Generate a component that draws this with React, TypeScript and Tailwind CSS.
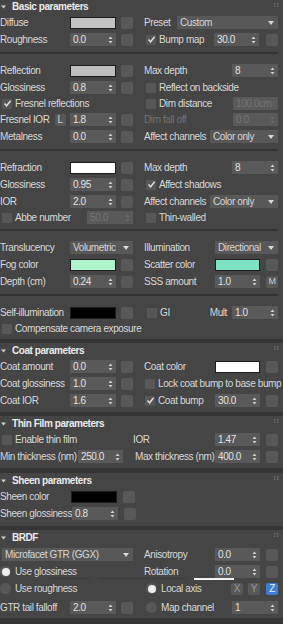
import React from "react";

type Kids = { children?: React.ReactNode };

function Arrows({ dim }: { dim?: boolean }) {
  return (
    <svg width="5" height="8" viewBox="0 0 5 8" className={dim ? "fill-[#6c6c6c]" : "fill-[#cfcfcf]"}>
      <path d="M2.5 0.5L4.5 3H0.5Z M0.5 5H4.5L2.5 7.5Z" />
    </svg>
  );
}

function Spin({ v, w = "w-[46px]", dim, cls = "" }: { v: string; w?: string; dim?: boolean; cls?: string }) {
  return (
    <div
      className={`${w} ${cls} h-[13px] shrink-0 bg-[#595959] flex items-center justify-between pl-[3px] pr-[3px] ${
        dim ? "text-[#767676]" : "text-[#e2e2e2]"
      }`}
    >
      <span>{v}</span>
      <Arrows dim={dim} />
    </div>
  );
}

function Swatch({ c, w = "w-[46px]" }: { c: string; w?: string }) {
  return <div className={`${w} ${c} h-[12px] shrink-0 border border-[#1c1c1c]`} />;
}

function MapBtn({ t, ml = "ml-[5px]" }: { t?: string; ml?: string }) {
  return (
    <div className={`${ml} w-[12px] h-[12px] shrink-0 rounded-[2px] bg-[#585858] flex items-center justify-center text-[9px] text-[#cfcfcf]`}>
      {t}
    </div>
  );
}

function Drop({ v, w, cls = "" }: { v: string; w: string; cls?: string }) {
  return (
    <div className={`${w} ${cls} h-[13px] shrink-0 bg-[#585858] flex items-center justify-between pl-[3px] pr-[4px] text-[#d6d6d6]`}>
      <span className="whitespace-nowrap">{v}</span>
      <svg width="6" height="4" viewBox="0 0 6 4">
        <path d="M0 0H6L3 4Z" fill="#d8d8d8" />
      </svg>
    </div>
  );
}

function Check({ on, label, cls = "", dim }: { on?: boolean; label: string; cls?: string; dim?: boolean }) {
  return (
    <div className={`flex items-center ${cls}`}>
      <div className="w-[10px] h-[10px] shrink-0 bg-[#575757] rounded-[1px] flex items-center justify-center">
        {on && (
          <svg width="9" height="9" viewBox="0 0 9 9">
            <path d="M1.5 4.5L3.6 6.8L7.6 1.8" stroke="#e0e0e0" strokeWidth="1.4" fill="none" />
          </svg>
        )}
      </div>
      <span className={`ml-[3px] whitespace-nowrap ${dim ? "text-[#777]" : ""}`}>{label}</span>
    </div>
  );
}

function Radio({ on, label, cls = "" }: { on?: boolean; label: string; cls?: string }) {
  return (
    <div className={`flex items-center ${cls}`}>
      <div className="w-[11px] h-[11px] shrink-0 rounded-full bg-[#585858] flex items-center justify-center">
        {on && <div className="w-[8px] h-[8px] rounded-full bg-[#ececec]" />}
      </div>
      <span className="ml-[4px] whitespace-nowrap">{label}</span>
    </div>
  );
}

function Grip() {
  return (
    <svg width="5" height="4" viewBox="0 0 5 4" className="ml-auto self-start mt-[3px] mr-[4px]">
      <rect x="0" y="0" width="1.5" height="1.5" fill="#6e6e6e" />
      <rect x="3" y="0" width="1.5" height="1.5" fill="#6e6e6e" />
      <rect x="0" y="2.5" width="1.5" height="1.5" fill="#6e6e6e" />
      <rect x="3" y="2.5" width="1.5" height="1.5" fill="#6e6e6e" />
    </svg>
  );
}

function Header({ title, h = "h-[15px]" }: { title: string; h?: string }) {
  return (
    <div className={`flex items-center ${h}`}>
      <svg width="5" height="4" viewBox="0 0 5 4" className="ml-[1px] mr-[6px]">
        <path d="M0 0.5H5L2.5 3.5Z" fill="#cfcfcf" />
      </svg>
      <span className="font-bold text-[#ebebeb] tracking-[-0.45px]">{title}</span>
      <Grip />
    </div>
  );
}

function Row({ h = "h-[17px]", children, cls = "" }: Kids & { h?: string; cls?: string }) {
  return <div className={`flex items-center ${h} ${cls}`}>{children}</div>;
}

function L({ label, children, w = "w-[141px]", pr = "pr-[8px]", dim }: Kids & { label?: string; w?: string; pr?: string; dim?: boolean }) {
  return (
    <div className={`${w} ${pr} shrink-0 flex items-center h-full`}>
      {label !== undefined && <span className={`flex-1 whitespace-nowrap ${dim ? "text-[#727272]" : ""}`}>{label}</span>}
      {children}
    </div>
  );
}

function R({ label, children, pl = "pl-[3px]", dim }: Kids & { label?: string; pl?: string; dim?: boolean }) {
  return (
    <div className={`flex-1 ${pl} pr-[5px] flex items-center h-full`}>
      {label !== undefined && <span className={`flex-1 whitespace-nowrap ${dim ? "text-[#727272]" : ""}`}>{label}</span>}
      {children}
    </div>
  );
}

function Sep() {
  return (
    <div className="h-[14px] pt-[4px] pr-[5px]">
      <div className="h-[2px] bg-[#333333]" />
    </div>
  );
}

function Band({ h = "h-[4px]" }: { h?: string }) {
  return <div className={`${h} bg-[#353535]`} />;
}

export default function App() {
  return (
    <div className="w-[283px] h-[624px] overflow-hidden bg-[#454545] font-['Liberation_Sans',Arial,sans-serif] text-[10px] tracking-[-0.4px] leading-none text-[#d8d8d8]">
      {/* Basic parameters */}
      <div className="pb-[3px]">
        <Header title="Basic parameters" h="h-[14px]" />
        <Row>
          <L label="Diffuse">
            <Swatch c="bg-[#c3c3c3]" />
            <MapBtn />
          </L>
          <R label="Preset">
            <Drop v="Custom" w="w-[101px]" />
          </R>
        </Row>
        <Row>
          <L label="Roughness">
            <Spin v="0.0" />
            <MapBtn />
          </L>
          <R>
            <Check on label="Bump map" cls="flex-1 ml-[2px]" />
            <Spin v="30.0" w="w-[45px]" />
            <MapBtn ml="ml-[7px]" />
          </R>
        </Row>
        <Sep />
        <Row>
          <L label="Reflection">
            <Swatch c="bg-[#bdbdbd]" />
            <MapBtn />
          </L>
          <R label="Max depth">
            <Spin v="8" />
          </R>
        </Row>
        <Row>
          <L label="Glossiness">
            <Spin v="0.8" />
            <MapBtn />
          </L>
          <R>
            <Check label="Reflect on backside" cls="ml-[2px]" />
          </R>
        </Row>
        <Row h="h-[15px]">
          <L>
            <Check on label="Fresnel reflections" cls="ml-[2px]" />
          </L>
          <R>
            <Check label="Dim distance" cls="flex-1 ml-[2px]" />
            <Spin v="100.0cm" w="w-[45px]" dim />
          </R>
        </Row>
        <Row>
          <L>
            <span className="whitespace-nowrap">Fresnel IOR</span>
            <div className="ml-[5px] w-[11px] h-[12px] bg-[#585858] rounded-[2px] flex items-center justify-center text-[#d0d0d0]">L</div>
            <div className="flex-1" />
            <Spin v="1.8" />
            <MapBtn />
          </L>
          <R label="Dim fall off" dim>
            <Spin v="0.0" w="w-[45px]" dim />
          </R>
        </Row>
        <Row>
          <L label="Metalness">
            <Spin v="0.0" />
            <MapBtn />
          </L>
          <R label="Affect channels">
            <Drop v="Color only" w="w-[68px]" />
          </R>
        </Row>
        <Sep />
        <Row>
          <L label="Refraction">
            <Swatch c="bg-[#ffffff]" />
            <MapBtn />
          </L>
          <R label="Max depth">
            <Spin v="8" />
          </R>
        </Row>
        <Row>
          <L label="Glossiness">
            <Spin v="0.95" />
            <MapBtn />
          </L>
          <R>
            <Check on label="Affect shadows" cls="ml-[2px]" />
          </R>
        </Row>
        <Row>
          <L label="IOR">
            <Spin v="2.0" />
            <MapBtn />
          </L>
          <R label="Affect channels">
            <Drop v="Color only" w="w-[68px]" />
          </R>
        </Row>
        <Row h="h-[15px]">
          <L>
            <Check label="Abbe number" cls="flex-1 ml-[2px]" />
            <Spin v="50.0" dim />
          </L>
          <R>
            <Check label="Thin-walled" cls="ml-[2px]" />
          </R>
        </Row>
        <Sep />
        <Row>
          <L label="Translucency">
            <Drop v="Volumetric" w="w-[63px]" />
          </L>
          <R label="Illumination">
            <Drop v="Directional" w="w-[63px]" />
          </R>
        </Row>
        <Row>
          <L label="Fog color">
            <Swatch c="bg-[#aef3cc]" />
            <MapBtn />
          </L>
          <R label="Scatter color">
            <Swatch c="bg-[#7ee3c4]" w="w-[45px]" />
            <MapBtn ml="ml-[6px]" />
          </R>
        </Row>
        <Row>
          <L label="Depth (cm)">
            <Spin v="0.24" />
            <MapBtn />
          </L>
          <R label="SSS amount">
            <Spin v="1.0" w="w-[45px]" />
            <MapBtn t="M" ml="ml-[6px]" />
          </R>
        </Row>
        <Sep />
        <Row>
          <L label="Self-illumination">
            <Swatch c="bg-[#000000]" />
            <MapBtn />
          </L>
          <R>
            <Check label="GI" cls="flex-1 ml-[3px]" />
            <span className="mr-[5px]">Mult</span>
            <Spin v="1.0" />
          </R>
        </Row>
        <Row h="h-[15px]">
          <Check label="Compensate camera exposure" cls="ml-[2px]" />
        </Row>
      </div>
      <Band />

      {/* Coat parameters */}
      <div className="pb-[3px]">
        <Header title="Coat parameters" />
        <Row>
          <L label="Coat amount">
            <Spin v="0.0" />
            <MapBtn />
          </L>
          <R label="Coat color">
            <Swatch c="bg-[#ffffff]" w="w-[45px]" />
            <MapBtn ml="ml-[6px]" />
          </R>
        </Row>
        <Row>
          <L label="Coat glossiness">
            <Spin v="1.0" />
            <MapBtn />
          </L>
          <R>
            <Check label="Lock coat bump to base bump" cls="ml-[1px]" />
          </R>
        </Row>
        <Row>
          <L label="Coat IOR">
            <Spin v="1.6" />
            <MapBtn />
          </L>
          <R>
            <Check on label="Coat bump" cls="flex-1 ml-[1px]" />
            <Spin v="30.0" w="w-[45px]" />
            <MapBtn ml="ml-[6px]" />
          </R>
        </Row>
      </div>
      <Band />

      {/* Thin film */}
      <div className="pb-[3px]">
        <Header title="Thin Film parameters" />
        <Row>
          <L w="w-[133px]" pr="pr-[0px]">
            <Check label="Enable thin film" cls="ml-[2px]" />
          </L>
          <R label="IOR" pl="pl-[0px]">
            <Spin v="1.47" w="w-[45px]" />
            <MapBtn ml="ml-[6px]" />
          </R>
        </Row>
        <Row>
          <L label="Min thickness (nm)" w="w-[133px]" pr="pr-[10px]">
            <Spin v="250.0" w="w-[45px]" />
          </L>
          <R label="Max thickness (nm)" pl="pl-[2px]">
            <Spin v="400.0" w="w-[45px]" />
            <MapBtn ml="ml-[6px]" />
          </R>
        </Row>
      </div>
      <Band h="h-[5px]" />

      {/* Sheen */}
      <div className="pb-[4px]">
        <Header title="Sheen parameters" />
        <Row>
          <L label="Sheen color" pr="pr-[6px]">
            <Swatch c="bg-[#000000]" />
            <MapBtn ml="ml-[6px]" />
          </L>
        </Row>
        <Row>
          <L label="Sheen glossiness" pr="pr-[6px]">
            <Spin v="0.8" />
            <MapBtn ml="ml-[6px]" />
          </L>
        </Row>
      </div>
      <Band />

      {/* BRDF */}
      <div className="relative pb-[2px]">
        <Header title="BRDF" h="h-[16px]" />
        <Row>
          <L pr="pr-[8px]">
            <Drop v="Microfacet GTR (GGX)" w="w-[131px]" cls="ml-[2px]" />
          </L>
          <R label="Anisotropy">
            <Spin v="0.0" w="w-[45px]" />
            <MapBtn ml="ml-[6px]" />
          </R>
        </Row>
        <Row>
          <L>
            <Radio on label="Use glossiness" />
          </L>
          <R label="Rotation">
            <Spin v="0.0" w="w-[45px]" />
            <MapBtn ml="ml-[6px]" />
          </R>
        </Row>
        <Row>
          <L>
            <Radio label="Use roughness" />
          </L>
          <R>
            <Radio on label="Local axis" cls="flex-1 ml-[2px]" />
            <div className="w-[12px] h-[12px] rounded-[2px] bg-[#585858] flex items-center justify-center text-[#9a9a9a]">X</div>
            <div className="ml-[5px] w-[12px] h-[12px] rounded-[2px] bg-[#585858] flex items-center justify-center text-[#9a9a9a]">Y</div>
            <div className="ml-[6px] w-[12px] h-[12px] rounded-[2px] bg-[#3c7fd0] flex items-center justify-center text-[#e8f0ff]">Z</div>
          </R>
        </Row>
        <Row cls="mt-[2px]">
          <L label="GTR tail falloff">
            <Spin v="2.0" />
            <MapBtn />
          </L>
          <R>
            <Radio label="Map channel" cls="flex-1 ml-[2px]" />
            <Spin v="1" />
          </R>
        </Row>
        {/* stray track lines drawn over the rotation row */}
        <div className="absolute left-[50px] top-[48px] w-[40px] h-[1px] bg-[#3a3a3a]" />
        <div className="absolute left-[98px] top-[48px] w-[88px] h-[1px] bg-[#3a3a3a]" />
        <div className="absolute left-[194px] top-[48px] w-[40px] h-[2px] bg-[#f2f2f2]" />
      </div>
      <Band h="h-[10px]" />
    </div>
  );
}
